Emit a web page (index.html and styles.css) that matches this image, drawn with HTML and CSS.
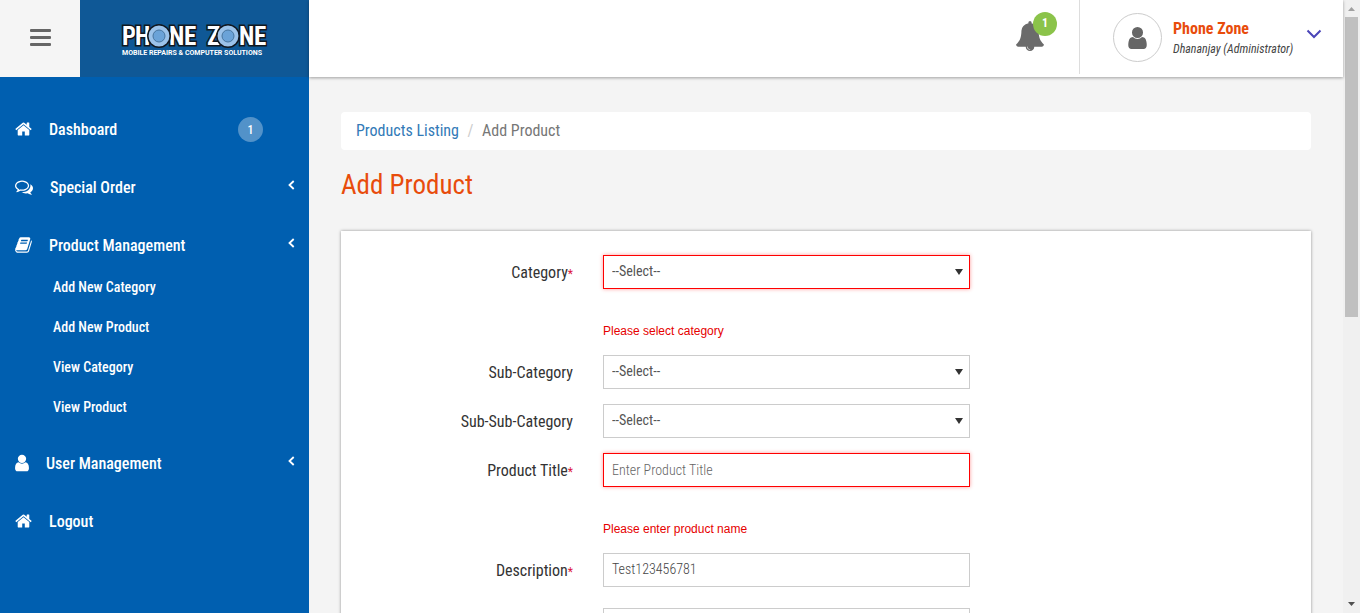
FILE: index.html
```html
<!DOCTYPE html>
<html lang="en">
<head>
<meta charset="utf-8">
<meta name="viewport" content="width=device-width, initial-scale=1">
<title>Add Product - Phone Zone</title>
<link rel="stylesheet" href="styles.css">
</head>
<body>
<svg class="sprite" aria-hidden="true">
  <symbol id="i-home" viewBox="64 0 1664 1792"><path d="M1472 992v480q0 26-19 45t-45 19h-384v-384h-256v384h-384q-26 0-45-19t-19-45v-480q0-1 .5-3t.5-3l575-474 575 474q1 2 1 6zm223-69l-62 74q-8 9-21 11h-3q-13 0-21-7l-692-577-692 577q-12 8-24 7-13-2-21-11l-62-74q-8-10-7-23.5t11-21.5l719-599q32-26 76-26t76 26l244 204v-195q0-14 9-23t23-9h192q14 0 23 9t9 23v408l219 182q10 8 11 21.5t-7 23.5z"/></symbol>
  <symbol id="i-comments" viewBox="0 0 1792 1792"><path d="M704 384q-153 0-286 52t-211.5 141-78.5 191q0 82 53 158t149 132l97 56-35 84q34-20 62-39l44-31 53 10q78 14 153 14 153 0 286-52t211.5-141 78.5-191-78.5-191-211.5-141-286-52zm0-128q191 0 353.5 68.5t256.5 186.5 94 257-94 257-256.5 186.5-353.5 68.5q-86 0-176-16-124 88-278 128-36 9-86 16h-3q-11 0-20.5-8t-11.5-21q-1-3-1-6.5t.5-6.5 2-6l2.5-5 3.5-5.5 4-5 4.5-5 4-4.5q5-6 23-25t26-29.5 22.5-29 25-38.5 20.5-44q-124-72-195-177t-71-224q0-139 94-257t256.5-186.5 353.5-68.5zm822 1169q10 24 20.5 44t25 38.5 22.5 29 26 29.5 23 25q1 1 4 4.5t4.5 5 4 5 3.5 5.5l2.5 5 2 6 .5 6.5-1 6.5q-3 14-13 22t-22 7q-50-7-86-16-154-40-278-128-90 16-176 16-271 0-472-132 58 4 88 4 161 0 309-45t264-129q125-92 192-212t67-254q0-77-23-152 129 71 204 178t75 230q0 120-71 224.5t-195 176.5z"/></symbol>
  <symbol id="i-book" viewBox="64 0 1664 1792"><path d="M1703 478q40 57 18 129l-275 906q-19 64-76.5 107.5t-122.5 43.5h-923q-77 0-148.5-53.5t-99.5-131.5q-24-67-2-127 0-4 3-27t4-37q1-8-3-21.5t-3-19.5q2-11 8-21t16.5-23.5 16.5-23.5q23-38 45-91.5t30-91.5q3-10 .5-30t-.5-28q3-11 17-28t17-23q21-36 42-92t25-90q1-9-2.5-32t.5-28q4-13 22-30.5t22-22.5q19-26 42.5-84.5t27.5-96.5q1-8-3-25.5t-2-26.5q2-8 9-18t18-23 17-21q8-12 16.5-30.5t15-35 16-36 19.5-32 26.5-23.5 36-11.5 47.5 5.5l-1 3q38-9 51-9h761q74 0 114 56t18 130l-274 906q-36 119-71.5 153.5t-128.5 34.5h-869q-27 0-38 15-11 16-1 43 24 70 144 70h923q29 0 56-15.5t35-41.5l300-987q7-22 5-57 38 15 59 43zm-1064 2q-4 13 2 22.5t20 9.5h608q13 0 25.5-9.5t16.5-22.5l21-64q4-13-2-22.5t-20-9.5h-608q-13 0-25.5 9.5t-16.5 22.5zm-83 256q-4 13 2 22.5t20 9.5h608q13 0 25.5-9.5t16.5-22.5l21-64q4-13-2-22.5t-20-9.5h-608q-13 0-25.5 9.5t-16.5 22.5z"/></symbol>
  <symbol id="i-user" viewBox="256 64 1280 1664"><path d="M1536 1399q0 109-62.5 187t-150.5 78h-854q-88 0-150.5-78t-62.5-187q0-85 8.5-160.5t31.5-152 58.5-131 94-89 134.5-34.5q131 128 313 128t313-128q76 0 134.5 34.5t94 89 58.5 131 31.5 152 8.5 160.5zm-256-887q0 159-112.5 271.5t-271.5 112.5-271.5-112.5-112.5-271.5 112.5-271.5 271.5-112.5 271.5 112.5 112.5 271.5z"/></symbol>
  <symbol id="i-bell" viewBox="64 0 1664 1792"><path d="M912 1696q0-16-16-16-59 0-101.5-42.5t-42.5-101.5q0-16-16-16t-16 16q0 73 51.5 124.5t124.5 51.5q16 0 16-16zm816-288q0 52-38 90t-90 38h-448q0 106-75 181t-181 75-181-75-75-181h-448q-52 0-90-38t-38-90q50-42 91-88t85-119.5 74.5-158.5 50-206 19.5-260q0-152 117-282.5t307-158.5q-8-19-8-39 0-40 28-68t68-28 68 28 28 68q0 20-8 39 190 28 307 158.5t117 282.5q0 139 19.5 260t50 206 74.5 158.5 85 119.5 91 88z"/></symbol>
  <symbol id="i-angle" viewBox="0 0 7 10"><path d="M5.700 1L1.500 5L5.700 9" fill="none" stroke="currentColor" stroke-width="1.800"/></symbol>
</svg>

<div class="app">
  <header class="topbar">
    <button class="menu-toggle" type="button" aria-label="Toggle menu">
      <svg width="21" height="18" viewBox="0 0 21 18" aria-hidden="true"><path fill="currentColor" d="M1 0h19q1 0 1 1v1q0 1-1 1H1q-1 0-1-1V1q0-1 1-1zM1 7h19q1 0 1 1v1q0 1-1 1H1q-1 0-1-1V8q0-1 1-1zM1 14h19q1 0 1 1v1q0 1-1 1H1q-1 0-1-1V15q0-1 1-1z"/></svg>
    </button>
    <a class="brand" href="#" aria-label="Phone Zone">
      <svg class="brand-logo" width="148" height="36" viewBox="0 0 148 36">
        <g class="brand-name">
          <text x="1 14" y="24">PH</text>
          <text x="48 63" y="24">NE</text>
          <text x="86" y="24">Z</text>
          <text x="118 133" y="24">NE</text>
        </g>
        <g fill="#9cc3ea" stroke="#111820" stroke-width="1.500">
          <circle cx="38" cy="15" r="11.200"/><circle cx="107" cy="15" r="11.200"/>
        </g>
        <g fill="#6ba3d8" stroke="#47759f" stroke-width="1">
          <circle cx="38" cy="15" r="6"/><circle cx="107" cy="15" r="6"/>
        </g>
        <text class="brand-tag" x="1" y="34">MOBILE REPAIRS &amp; COMPUTER SOLUTIONS</text>
      </svg>
    </a>
    <div class="topbar-right">
      <button class="bell" type="button" aria-label="Notifications">
        <svg class="bell-icon" aria-hidden="true"><use href="#i-bell"/></svg>
        <span class="bell-count">1</span>
      </button>
      <button class="account" type="button">
        <span class="avatar"><svg class="avatar-icon" aria-hidden="true"><use href="#i-user"/></svg></span>
        <span class="who"><strong class="who-name">Phone Zone</strong><em class="who-role">Dhananjay (Administrator)</em></span>
        <svg class="account-caret" width="16" height="10" viewBox="0 0 16 10" aria-hidden="true"><path d="M1.500 1.500L8 8L14.500 1.500" fill="none" stroke="#4a45b8" stroke-width="2"/></svg>
      </button>
    </div>
  </header>

  <div class="body">
    <nav class="sidebar" aria-label="Main">
      <a class="nav-item" href="#"><svg class="nav-icon" aria-hidden="true"><use href="#i-home"/></svg><span class="nav-text">Dashboard</span><span class="nav-count">1</span></a>
      <a class="nav-item" href="#"><svg class="nav-icon nav-icon-wide" aria-hidden="true"><use href="#i-comments"/></svg><span class="nav-text">Special Order</span><svg class="nav-angle" aria-hidden="true"><use href="#i-angle"/></svg></a>
      <div class="nav-group">
        <a class="nav-item" href="#"><svg class="nav-icon" aria-hidden="true"><use href="#i-book"/></svg><span class="nav-text">Product Management</span><svg class="nav-angle" aria-hidden="true"><use href="#i-angle"/></svg></a>
        <a class="nav-sub" href="#">Add New Category</a>
        <a class="nav-sub" href="#">Add New Product</a>
        <a class="nav-sub" href="#">View Category</a>
        <a class="nav-sub" href="#">View Product</a>
      </div>
      <a class="nav-item" href="#"><svg class="nav-icon nav-icon-slim" aria-hidden="true"><use href="#i-user"/></svg><span class="nav-text">User Management</span><svg class="nav-angle" aria-hidden="true"><use href="#i-angle"/></svg></a>
      <a class="nav-item" href="#"><svg class="nav-icon" aria-hidden="true"><use href="#i-home"/></svg><span class="nav-text">Logout</span></a>
    </nav>

    <main class="content">
      <nav class="crumbs" aria-label="Breadcrumb"><a class="crumb-link" href="#">Products Listing</a><span class="crumb-sep">/</span><span>Add Product</span></nav>
      <h1 class="title">Add Product</h1>
      <form class="card">
        <div class="row">
          <label class="label" for="category">Category<span class="req">*</span></label>
          <div class="field">
            <select class="control select invalid" id="category" aria-describedby="category-error"><option>--Select--</option></select>
            <p class="error" id="category-error">Please select category</p>
          </div>
        </div>
        <div class="row">
          <label class="label" for="sub">Sub-Category</label>
          <div class="field"><select class="control select" id="sub"><option>--Select--</option></select></div>
        </div>
        <div class="row">
          <label class="label" for="subsub">Sub-Sub-Category</label>
          <div class="field"><select class="control select" id="subsub"><option>--Select--</option></select></div>
        </div>
        <div class="row">
          <label class="label" for="ptitle">Product Title<span class="req">*</span></label>
          <div class="field">
            <input class="control invalid" id="ptitle" type="text" placeholder="Enter Product Title" aria-describedby="ptitle-error">
            <p class="error" id="ptitle-error">Please enter product name</p>
          </div>
        </div>
        <div class="row row-area">
          <label class="label" for="desc">Description<span class="req">*</span></label>
          <div class="field"><textarea class="control area" id="desc" rows="1">Test123456781</textarea></div>
        </div>
        <div class="row">
          <span></span>
          <div class="field"><input class="control" type="text" aria-label="Details"></div>
        </div>
      </form>
    </main>
  </div>
</div>
<div class="scrollbar" aria-hidden="true">
  <svg width="17" height="17" viewBox="0 0 17 17"><path d="M5 11h7L8.500 7z" fill="#a0a0a0"/></svg>
  <div class="thumb"></div>
  <svg width="17" height="17" viewBox="0 0 17 17"><path d="M5 6h7L8.500 10z" fill="#505050"/></svg>
</div>
</body>
</html>
```
FILE: styles.css
```css
* { box-sizing: border-box; }

body {
  margin: 0;
  display: flex;
  height: 100vh;
  overflow: hidden;
  background: #f4f4f4;
  color: #333;
  font-family: "Roboto Condensed", "Liberation Sans Narrow", Roboto, sans-serif;
  font-size: 16px;
  line-height: 20px;
}

a { color: inherit; text-decoration: none; }
button { border: 0; background: none; padding: 0; color: inherit; font: inherit; }
svg { fill: currentColor; flex: none; }
.sprite { position: absolute; width: 0; height: 0; }

.app { flex: 1; min-width: 0; display: flex; flex-direction: column; }

/* Top bar */
.topbar {
  flex: none;
  display: flex;
  height: 77px;
  background: #fff;
}
.menu-toggle {
  width: 80px;
  padding-bottom: 2px;
  display: grid;
  place-items: center;
  background: #f5f5f5;
  color: #666;
}
.brand {
  width: 229px;
  display: grid;
  place-items: center;
  background: #0f5896;
}
.brand-logo { overflow: visible; }
.brand-name {
  font: 700 25px "Roboto Condensed", "Liberation Sans Narrow", Roboto, sans-serif;
  fill: #fff;
  stroke: #111820;
  stroke-width: 3px;
  paint-order: stroke;
}
.brand-tag { font: 700 7px Roboto, "Liberation Sans", sans-serif; fill: #fff; }
.topbar-right {
  flex: 1;
  display: flex;
  justify-content: flex-end;
  box-shadow: 0 1px 3px rgba(0, 0, 0, .35);
  z-index: 1;
}
.bell {
  position: relative;
  width: 64px;
  margin-bottom: 3px;
  border-right: 1px solid #ddd;
  display: flex;
  align-items: center;
  color: #6b6b6b;
}
.bell-icon { width: 28px; height: 30px; margin-bottom: 2px; }
.bell-count {
  position: absolute;
  left: 17px;
  top: 12px;
  width: 24px;
  height: 24px;
  border-radius: 50%;
  background: #8bc34a;
  color: #fff;
  font-size: 12px;
  font-weight: 700;
  line-height: 23px;
  text-align: center;
}
.account {
  display: flex;
  align-items: center;
  padding: 0 21px 2px 33px;
  text-align: left;
}
.avatar {
  width: 49px;
  height: 49px;
  border: 1px solid #ccc;
  border-radius: 50%;
  display: grid;
  place-items: center;
  color: #666;
}
.avatar-icon { width: 19px; height: 24px; }
.who { margin-left: 11px; padding-top: 2px; display: flex; flex-direction: column; width: 133px; white-space: nowrap; }
.who-name { color: #e84c0c; font-size: 16px; }
.who-role { color: #444; font-size: 12px; }
.account-caret { margin-bottom: 8px; }

/* Sidebar */
.body { flex: 1; min-height: 0; display: flex; }
.sidebar {
  flex: none;
  width: 309px;
  padding: 30px 14px 0 15px;
  display: flex;
  flex-direction: column;
  gap: 14px;
  background: #005fb0;
  color: #fff;
  font-weight: 500;
}
.nav-item { display: flex; align-items: center; height: 44px; }
.nav-text { padding-top: 2px; }
.nav-icon { width: 17px; height: 18px; margin-right: 17px; }
.nav-icon-wide { width: 18px; }
.nav-icon-slim { width: 14px; }
.nav-count {
  margin-left: auto;
  margin-right: 32px;
  width: 25px;
  height: 25px;
  border-radius: 50%;
  background: rgba(255, 255, 255, .32);
  font-size: 12px;
  line-height: 26px;
  text-align: center;
}
.nav-angle { width: 7px; height: 10px; margin-left: auto; margin-bottom: 4px; }
.nav-sub { display: block; padding-left: 38px; font-size: 14px; line-height: 40px; }

/* Page content */
.content { flex: 1; min-width: 0; padding: 35px 32px 0; overflow: hidden; }
.crumbs {
  display: flex;
  padding: 9px 15px;
  border-radius: 4px;
  background: #fff;
  color: #777;
}
.crumb-link { color: #337ab7; }
.crumb-sep { width: 23px; text-align: center; color: #ccc; }
.title {
  margin: 20px 0 31px;
  color: #e84c0c;
  font-size: 27px;
  font-weight: 400;
  line-height: 30px;
}
.card {
  padding: 24px 9px 0;
  background: #fff;
  box-shadow: 0 0 3px rgba(0, 0, 0, .4);
}
.row { display: grid; grid-template-columns: 3fr 5fr 4fr; margin-bottom: 15px; }
.row-area { margin-bottom: 21px; }
.label { padding: 8px 15px 0 0; text-align: right; }
.req { color: #dc143c; font-size: 12px; }
.field { padding: 0 15px; min-width: 0; }
.control {
  display: block;
  width: 100%;
  height: 34px;
  padding: 6px 8px;
  border: 1px solid #ccc;
  border-radius: 0;
  background: #fff;
  color: #444;
  font: inherit;
  font-size: 14px;
  font-weight: 300;
  outline: 0;
}
.control::placeholder { color: #666; opacity: 1; }
.select {
  appearance: none;
  padding: 5px 8px 7px;
  font-weight: 400;
  color: #555;
  background: #fff url("data:image/svg+xml,%3Csvg xmlns='http://www.w3.org/2000/svg' width='8' height='6'%3E%3Cpath d='M0 0h8L4 6z' fill='%23333'/%3E%3C/svg%3E") no-repeat right 6px center;
}
.area { resize: none; overflow: hidden; line-height: 18px; }
.invalid { border-color: #f00; box-shadow: 0 0 4px rgba(255, 0, 0, .4); }
.error {
  margin: 32px 0 0;
  height: 19px;
  color: #e60000;
  font: 12px/20px "Liberation Sans", sans-serif;
}

/* Scroll track */
.scrollbar {
  flex: none;
  width: 17px;
  display: flex;
  flex-direction: column;
  justify-content: space-between;
  background: #f0f0f0;
}
.thumb { height: 49%; margin: 0 2px auto; background: #c0c0c0; }
```
